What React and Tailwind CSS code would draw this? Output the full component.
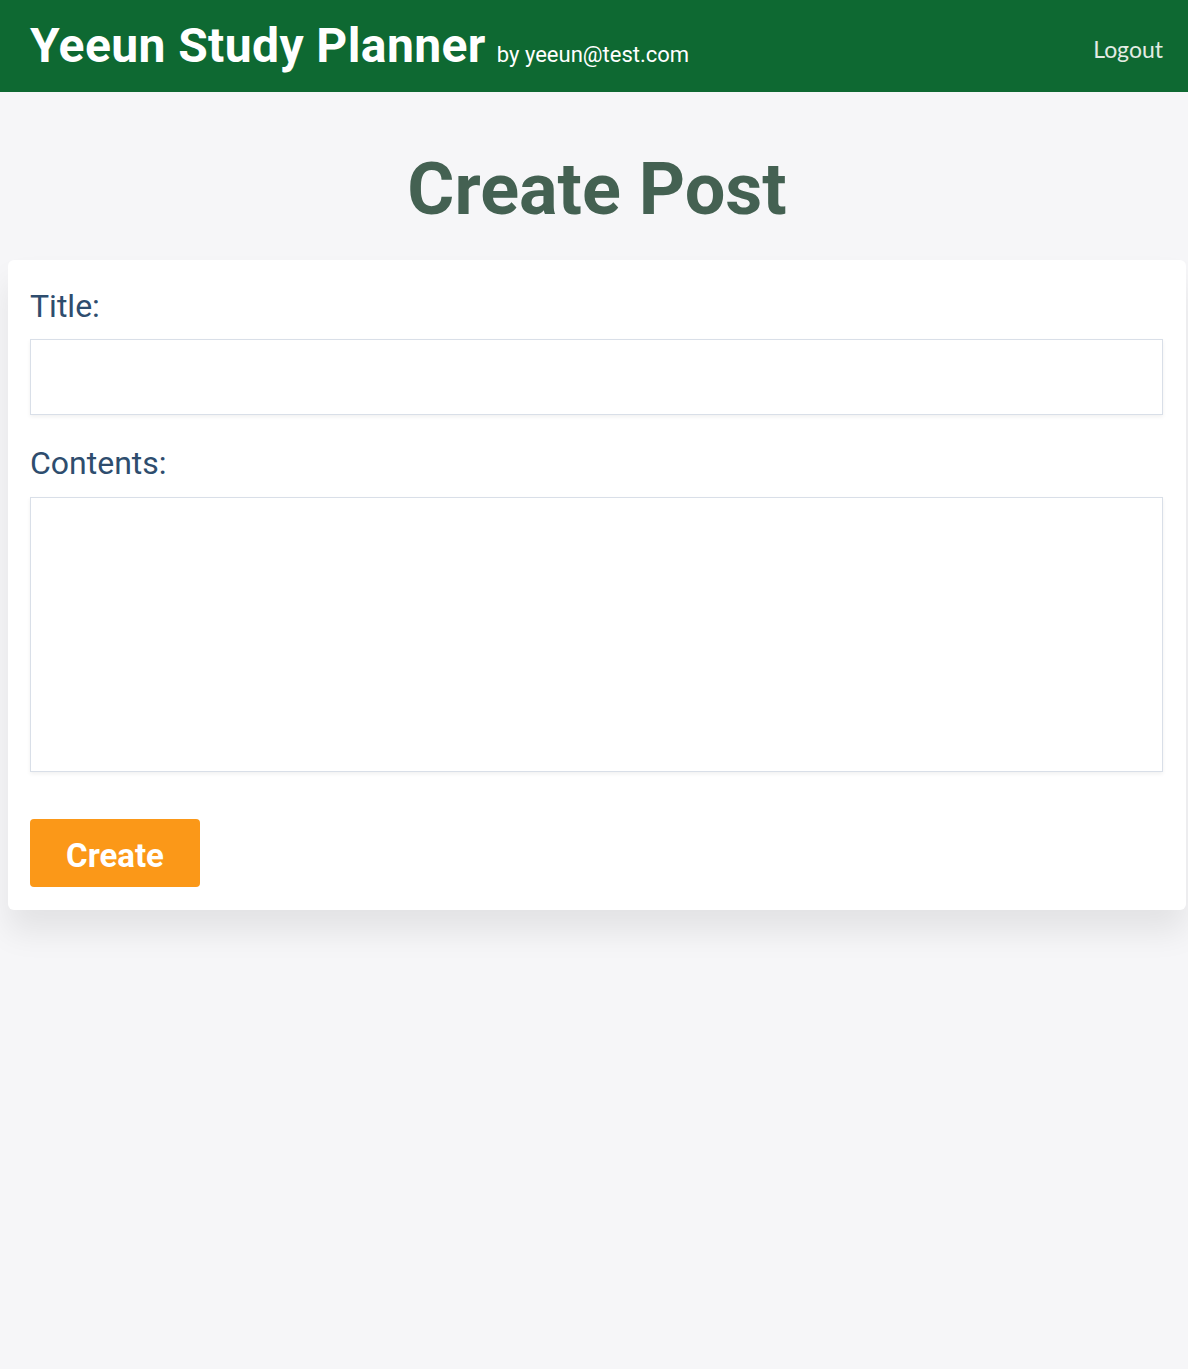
import React from 'react';

const Header = () => (
  <header className="h-[92px] bg-[#0e6932] flex items-center justify-between pl-[30px] pr-[25px]">
    <div className="flex items-baseline">
      <h1 className="text-[48px] font-bold text-white tracking-[0.4px] leading-none font-['Roboto',sans-serif]">
        Yeeun Study Planner
      </h1>
      <span className="ml-[11px] text-[22px] text-white font-['Roboto',sans-serif]">
        by yeeun@test.com
      </span>
    </div>
    <button className="text-[23px] text-[#e3ece4] font-['Lato',sans-serif] mt-[6px]">Logout</button>
  </header>
);

const App = () => {
  return (
    <div className="min-h-[1369px] bg-[#f6f6f8] font-['Roboto',sans-serif]">
      <Header />
      <main className="pl-[8px] pr-[2px]">
        <h2 className="text-center text-[72px] font-bold text-[#446152] leading-none pt-[62px] pb-[34px]">
          Create Post
        </h2>
        <form className="bg-white rounded-[6px] shadow-[0_22px_32px_rgba(0,0,0,0.08)] pl-[22px] pr-[23px] pt-[26px] pb-[23px]">
          <label className="block text-[32px] text-[#2e4d6e] leading-[40px] mb-[13px]">Title:</label>
          <input
            type="text"
            className="block w-full h-[76px] border border-[#d9dfe8] shadow-[0_2px_4px_rgba(0,0,0,0.06)] outline-none"
          />
          <label className="block text-[32px] text-[#2e4d6e] leading-[40px] mt-[28px] mb-[14px]">Contents:</label>
          <textarea className="block w-full h-[275px] border border-[#d9dfe8] shadow-[0_2px_4px_rgba(0,0,0,0.06)] outline-none resize-none" />
          <button
            type="button"
            className="mt-[47px] w-[170px] h-[68px] pt-[5px] rounded-[4px] bg-[#fb9818] text-white text-[33px] font-bold"
          >
            Create
          </button>
        </form>
      </main>
    </div>
  );
};

export default App;
